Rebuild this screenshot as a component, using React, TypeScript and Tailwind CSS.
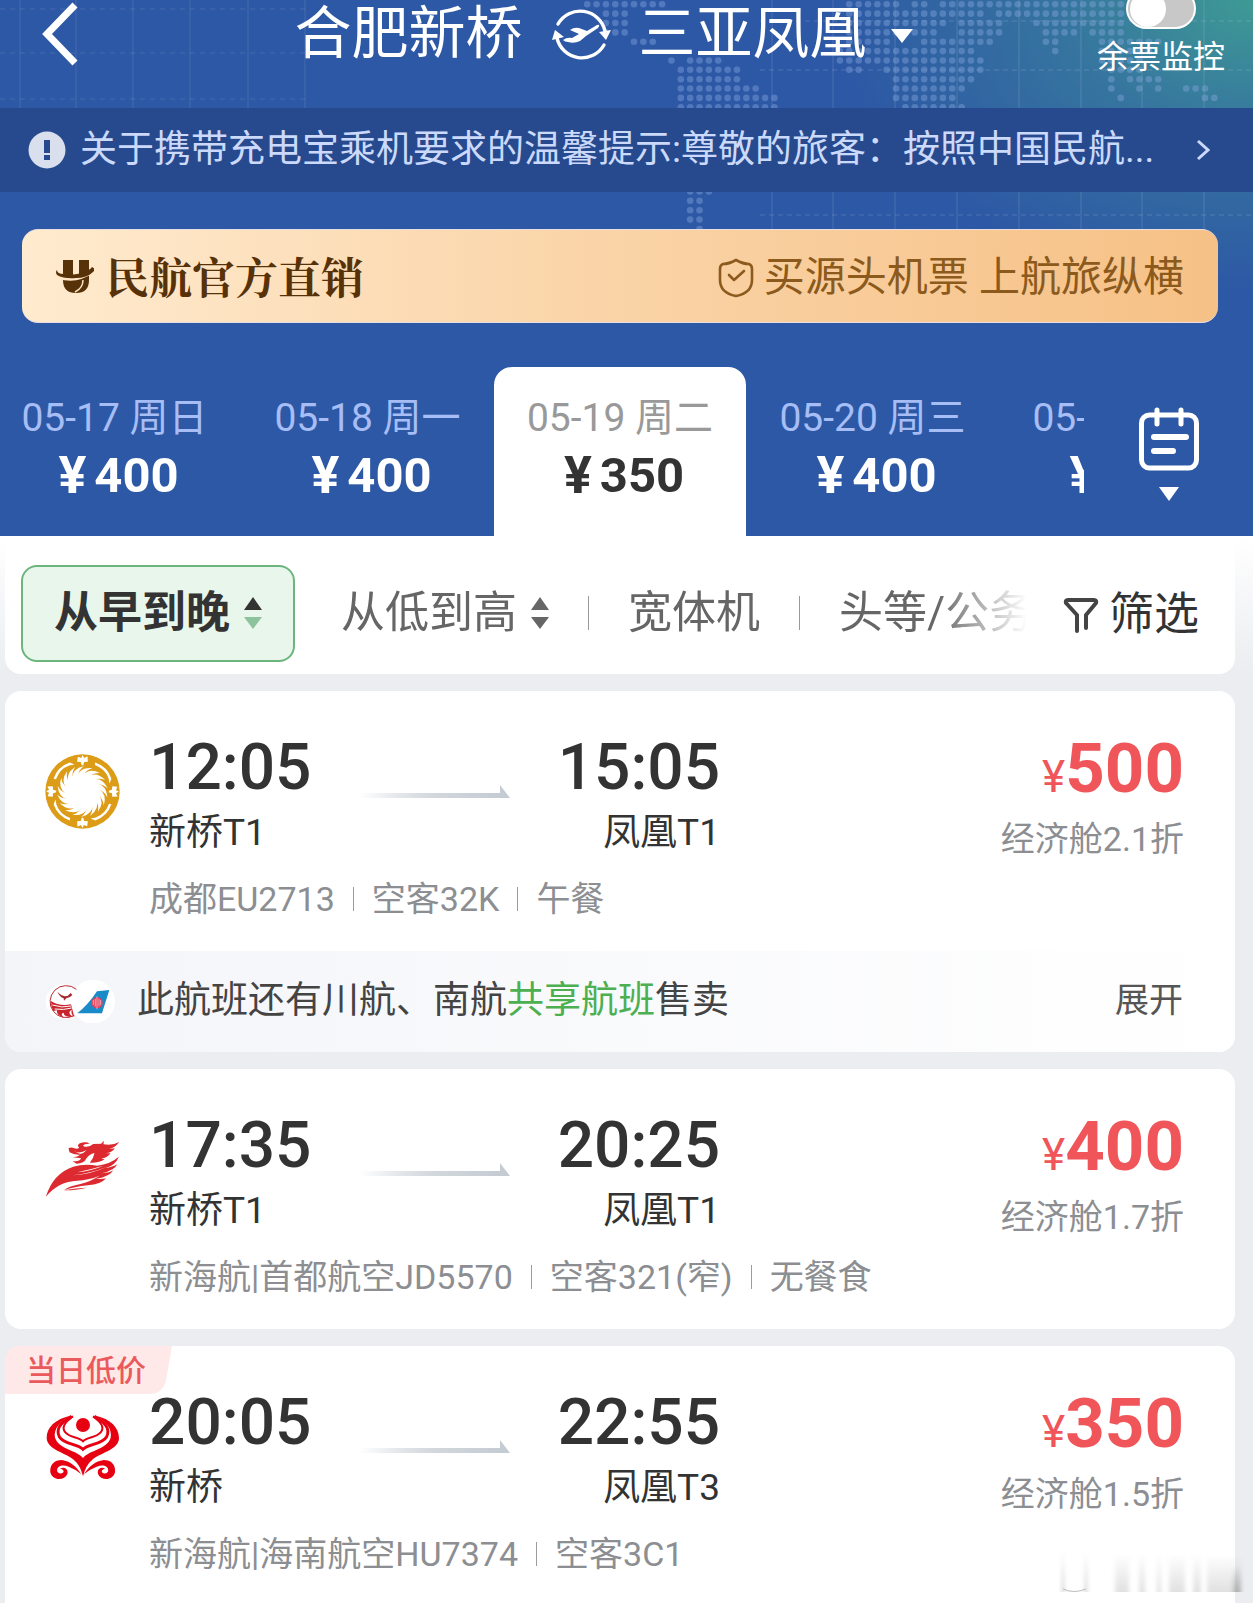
import { ReactNode } from "react";

const DOT_ROWS: [number, [number, number][]][] = [
  [0, [[-5, 3], [23, 28], [30, 31], [33, 52]]],
  [1, [[-3, -1], [23, 37], [39, 52]]],
  [2, [[-3, -1], [23, 33], [35, 39], [43, 52]]],
  [3, [[-3, -1], [23, 32], [35, 39], [44, 47], [49, 52]]],
  [4, [[0, 2], [23, 27], [31, 35], [36, 38], [44, 45], [50, 56]]],
  [5, [[22, 36], [45, 45], [50, 55]]],
  [6, [[4, 4], [6, 9], [22, 37], [50, 54]]],
  [7, [[5, 11], [23, 24], [27, 37], [51, 54]]],
  [8, [[5, 11], [28, 36], [51, 51], [53, 56]]],
  [9, [[5, 13], [28, 35], [51, 51], [54, 54], [56, 56], [59, 61]]],
  [10, [[5, 15], [28, 34], [52, 52], [61, 62]]],
  [11, [[5, 15], [29, 35]]],
  [20, [[6, 8]]],
  [21, [[6, 7]]],
  [22, [[6, 7]]],
  [23, [[6, 7]]],
  [24, [[7, 7]]],
];

function MapBackdrop() {
  return (
    <svg className="absolute right-0 top-0 h-[230px] w-[1253px]" viewBox="0 0 1253 230" aria-hidden="true">
      <g stroke="#ffffff" strokeOpacity="0.12">
        {[20, 76, 133, 190, 248, 305].map((x) => (
          <path key={x} d={`M${x} 0V108`} />
        ))}
        {[9, 53, 99].map((y) => (
          <path key={y} d={`M0 ${y}H306`} strokeDasharray="5 5" />
        ))}
        {[772, 833, 895, 957, 1019, 1081, 1142, 1204].map((x) => (
          <path key={x} d={`M${x} 0V230`} strokeOpacity="0.14" />
        ))}
        {[21, 70, 215].map((y) => (
          <path key={y} d={`M760 ${y}H1253`} strokeDasharray="5 4" strokeOpacity="0.16" />
        ))}
      </g>
      <g fill="#86a8dd" fillOpacity="0.42">
        {DOT_ROWS.flatMap(([row, spans]) =>
          spans.flatMap(([from, to]) =>
            Array.from({ length: to - from + 1 }, (_, i) => (
              <circle key={`${row}-${from + i}`} cx={634 + (from + i) * 9.36} cy={4.3 + row * 9.36} r="3.3" />
            )),
          ),
        )}
      </g>
    </svg>
  );
}

function SwapIcon() {
  return (
    <svg className="h-[56px] w-[60px]" viewBox="0 0 60 56" fill="none" aria-hidden="true">
      <g stroke="#fff" strokeWidth="3.4" strokeLinecap="round">
        <path d="M7 18A25.500 25.500 0 0 1 54 25" />
        <path d="M53 39A25.500 25.500 0 0 1 6 32" />
      </g>
      <g fill="#fff">
        <path d="M48 26L60 24L55 34Z" />
        <path d="M1 34L4 24L13 31Z" />
        <path d="M12 34Q16 31 21 32L28 28L19 24Q23 21 28 22L36 25L46 19Q50 18 47 22L35 30L29 35Q23 38 17 36Q14 36 12 34Z" />
      </g>
    </svg>
  );
}

function BrandMark() {
  return (
    <svg className="h-[36px] w-[38px]" viewBox="0 0 38 36" aria-hidden="true">
      <path d="M7 2H17V20H23V2H33V22Q33 35 20 35Q7 35 7 22Z" fill="#573107" />
      <path d="M2 19Q20 25 36 14" fill="none" stroke="#fee6c6" strokeWidth="3" />
      <path d="M27 22Q27 30 19 34" fill="none" stroke="#fee6c6" strokeWidth="1.500" />
      <path d="M1 12Q1 16 8 16Q18 18 28 14Q34 12 36 9Q40 11 37 14Q31 20 20 20Q8 21 1 17Q-1 14 1 12Z" fill="#573107" />
    </svg>
  );
}

function ShieldIcon() {
  return (
    <svg className="h-[40px] w-[36px]" viewBox="0 0 36 40" fill="none" stroke="#8b5a1c" strokeWidth="2.600" strokeLinejoin="round" strokeLinecap="round" aria-hidden="true">
      <path d="M18 2Q25 6 31 6Q34 7 34 11V22Q34 35 18 38Q2 35 2 22V11Q2 7 5 6Q11 6 18 2Z" />
      <path d="M11 17L16 22L26 13" />
    </svg>
  );
}

function CalendarIcon() {
  return (
    <svg className="h-[64px] w-[60px]" viewBox="0 0 60 64" fill="none" stroke="#fff" strokeWidth="5" strokeLinecap="round" aria-hidden="true">
      <rect x="2.500" y="8" width="55" height="53" rx="8" />
      <path d="M18 3V17M42 3V17" />
      <path d="M15 30H47M15 44H34" strokeWidth="6" />
    </svg>
  );
}

function SortArrows({ up, down }: { up: string; down: string }) {
  return (
    <svg className="h-[32px] w-[18px]" viewBox="0 0 18 32" aria-hidden="true">
      <path d="M9 0L18 13H0Z" fill={up} />
      <path d="M0 20H18L9 32Z" fill={down} />
    </svg>
  );
}

function RouteArrow() {
  return (
    <svg className="h-[13px] w-[150px]" viewBox="0 0 150 13" aria-hidden="true">
      <defs>
        <linearGradient id="route" x1="0" x2="1" y1="0" y2="0">
          <stop offset="0" stopColor="#c3cad2" stopOpacity="0" />
          <stop offset="0.500" stopColor="#d2d7dc" />
          <stop offset="1" stopColor="#c3cad2" />
        </linearGradient>
      </defs>
      <path d="M0 8H140V0L150 13H0Z" fill="url(#route)" />
    </svg>
  );
}

function ChengduLogo() {
  return (
    <svg className="h-[75px] w-[75px]" viewBox="134 100 224 224" role="img" aria-label="成都航空">
      <circle cx="246" cy="212" r="111" fill="#dc9c17" />
      <circle cx="246" cy="212" r="54" fill="#fff" />
      {Array.from({ length: 18 }, (_, i) => (
        <path key={i} transform={`rotate(${i * 20} 246 212)`} d="M230 166Q240 138 276 142Q256 148 250 164Z" fill="#fff" />
      ))}
      {[0, 45, 90, 135, 180, 225, 270, 315].map((a) => (
        <g key={a} transform={`rotate(${a} 246 212)`}>
          {a % 90 === 0 ? (
            <path d="M230 123L232 108L242 112L246 103L251 112L261 107L262 123L251 124L248 134L243 132L241 124Z" fill="#fff" />
          ) : (
            <path d="M212 124Q246 107 280 124L286 138L273 129Q246 116 216 130Z" fill="#fff" />
          )}
        </g>
      ))}
    </svg>
  );
}

function CapitalLogo() {
  return (
    <svg className="h-[58px] w-[75px]" viewBox="134 126 224 174" role="img" aria-label="首都航空" fill="#dd2a30">
      <path d="M136 296Q158 226 218 206Q252 196 290 203Q330 198 355 176Q346 201 314 211Q342 205 351 198Q342 217 304 226Q330 224 338 217Q330 235 286 243Q312 243 318 240Q300 260 262 262Q222 266 190 277Q206 264 240 258Q272 250 296 234Q262 247 230 248Q174 250 136 296Z" />
      <path d="M204 151Q213 146 221 151Q231 154 236 149Q228 142 238 136Q256 129 268 137Q252 136 247 143Q261 152 278 138L302 137L310 128L309 139Q334 144 356 132Q344 149 326 153L343 151Q334 165 316 166L330 166Q320 181 302 181L312 184Q298 195 268 194Q279 182 282 165Q266 169 258 181Q251 197 228 197L216 189Q236 193 242 181L217 178Q232 177 239 170Q220 171 207 163Z" />
      <path d="M221 160Q238 168 259 156Q250 166 239 168Z" fill="#fff" />
      <path d="M216 232Q270 229 320 206Q276 224 216 232ZM230 223Q273 219 309 203Q270 214 230 223Z" fill="#fff" />
      <path d="M190 277Q228 270 258 269Q236 276 190 277Z" />
    </svg>
  );
}

function HainanLogo() {
  return (
    <svg className="h-[67px] w-[74px]" viewBox="135 938 222 201" role="img" aria-label="海南航空">
      <g fill="#e60012">
        <circle cx="246" cy="974" r="21" />
        <path d="M208 946C164 956 136 980 137 1014C139 1048 190 1056 218 1078Q238 1094 246 1128Q254 1094 274 1078C302 1056 353 1048 354 1014C354 980 328 956 284 946C312 960 335 985 329 1012C318 1048 266 1048 246 1073C226 1048 174 1048 162 1012C156 985 180 960 208 946Z" />
        <path d="M241 1122C224 1096 207 1083 183 1079C157 1079 146 1096 148 1116C153 1141 190 1143 199 1121C203 1106 190 1098 177 1105Q190 1107 187 1116Q178 1124 169 1114C165 1098 183 1091 203 1099Q223 1106 241 1122Z" />
        <path d="M249 1122C266 1096 283 1083 308 1079C334 1079 344 1096 342 1116C337 1141 300 1143 291 1121C287 1106 300 1098 313 1105Q300 1107 303 1116Q312 1124 321 1114C325 1098 307 1091 287 1099Q267 1106 249 1122Z" />
      </g>
      <g fill="none" stroke="#e60012">
        <path d="M212 948C178 966 164 988 175 1009C189 1033 230 1030 246 1047C262 1030 303 1033 317 1009C328 988 314 966 280 948" strokeWidth="9" />
        <path d="M216 948C190 966 181 982 193 996C208 1013 234 1010 246 1023C258 1010 284 1013 299 996C311 982 302 966 276 948" strokeWidth="6" />
      </g>
    </svg>
  );
}

function ShareLogos() {
  return (
    <svg className="h-[44px] w-[70px]" viewBox="134 770 210 132" role="img" aria-label="川航、南航">
      <circle cx="188" cy="838" r="52" fill="#fff" />
      <circle cx="278" cy="838" r="66" fill="#fff" />
      <path d="M228 801A48 48 0 1 0 222 879" fill="none" stroke="#bd2b31" strokeWidth="3" />
      <path d="M171 808Q182 820 193 822Q203 823 211 812L216 818Q207 828 198 828L191 835L190 828Q178 823 171 808Z" fill="#a8272c" />
      <path d="M152 836Q176 852 212 846L222 884Q209 872 215 862Q197 871 219 884Q190 885 190 871Q177 875 192 886Q165 878 170 864L159 866Q151 852 152 836Z" fill="#c9252d" />
      <path d="M156 848Q185 858 212 851M163 860Q190 864 214 857" stroke="#fff" strokeWidth="3" fill="none" />
      <path d="M231 873Q262 849 290 807L327 803L305 873Z" fill="#1b8ac8" />
      <circle cx="290" cy="841" r="17" fill="#e4405a" />
      <path d="M290 822V861M279 833V848M285 830V852M296 830V852M301 833V848" stroke="#f9d3da" strokeWidth="2" />
    </svg>
  );
}

const DAYS = [
  { date: "05-17 周日", price: "400" },
  { date: "05-18 周一", price: "400" },
  { date: "05-19 周二", price: "350", active: true },
  { date: "05-20 周三", price: "400" },
  { date: "05-21 周四", price: "400" },
];

type Flight = {
  logo: ReactNode;
  depart: string;
  from: string;
  arrive: string;
  to: string;
  price: string;
  discount: string;
  details: string[];
};

function FlightBody({ f }: { f: Flight }) {
  return (
    <div className="flex h-[260px] pl-10 pr-[51px] pt-10">
      <div className="flex h-[120px] w-[75px] shrink-0 items-center justify-center">{f.logo}</div>
      <div className="flex min-w-0 flex-1 flex-col pl-[29px]">
        <div className="flex justify-between">
          <div className="flex w-[571px] justify-between">
            <div className="w-[162px]">
              <div className="text-[64px] font-medium leading-[74px] text-[#333]">{f.depart}</div>
              <div className="mt-2 text-[37px] leading-[40px] text-[#333]">{f.from}</div>
            </div>
            <div className="ml-8 flex-1 pl-[17px] pt-[54px]">
              <RouteArrow />
            </div>
            <div className="text-right">
              <div className="text-[64px] font-medium leading-[74px] text-[#333]">{f.arrive}</div>
              <div className="mt-2 text-[37px] leading-[40px] text-[#333]">{f.to}</div>
            </div>
          </div>
          <div className="text-right">
            <div className="h-[76px] font-bold leading-[76px] text-[#f0555a]">
              <span className="text-[44px] font-normal">¥</span>
              <span className="text-[69px]">{f.price}</span>
            </div>
            <div className="mt-3 text-[34px] leading-[40px] text-[#8c8e92]">{f.discount}</div>
          </div>
        </div>
        <div className="mt-5 flex items-center text-[34px] leading-[40px] text-[#8c8e92]">
          {f.details.map((d, i) => (
            <span key={d} className="flex items-center">
              {i > 0 && <span className="mx-[18px] h-6 w-px bg-[#9a9ca0]" />}
              {d}
            </span>
          ))}
        </div>
      </div>
    </div>
  );
}

const FLIGHTS: Flight[] = [
  { logo: <ChengduLogo />, depart: "12:05", from: "新桥T1", arrive: "15:05", to: "凤凰T1", price: "500", discount: "经济舱2.1折", details: ["成都EU2713", "空客32K", "午餐"] },
  { logo: <CapitalLogo />, depart: "17:35", from: "新桥T1", arrive: "20:25", to: "凤凰T1", price: "400", discount: "经济舱1.7折", details: ["新海航|首都航空JD5570", "空客321(窄)", "无餐食"] },
  { logo: <HainanLogo />, depart: "20:05", from: "新桥", arrive: "22:55", to: "凤凰T3", price: "350", discount: "经济舱1.5折", details: ["新海航|海南航空HU7374", "空客3C1"] },
];

export default function App() {
  return (
    <div className="relative flex min-h-screen flex-col overflow-hidden bg-[#ebedf0] font-['Roboto','Noto_Sans_CJK_SC',sans-serif]">
      <header className="relative bg-[#2d58a5] bg-[radial-gradient(ellipse_420px_290px_at_100%_0%,#3e9a94_0%,#36759f_45%,#2d58a5_100%)]">
        <MapBackdrop />
        <div className="relative grid h-[108px] grid-cols-[295fr_auto_341fr] text-white">
          <button aria-label="返回" className="h-[68px] w-[120px] pl-10">
            <svg className="h-[64px] w-[40px]" viewBox="0 0 40 64" fill="none" stroke="#fff" strokeWidth="7" aria-hidden="true">
              <path d="M35 3L7 32L35 61" />
            </svg>
          </button>
          <div className="flex h-[68px] items-center whitespace-nowrap text-[57px] leading-[68px]">
            <span>合肥新桥</span>
            <button aria-label="交换城市" className="mx-7">
              <SwapIcon />
            </button>
            <button className="flex items-center">
              三亚凤凰
              <svg className="ml-6 mt-1 h-[14px] w-[22px]" viewBox="0 0 22 14" fill="#fff" aria-hidden="true">
                <path d="M0 0H22L11 14Z" />
              </svg>
            </button>
          </div>
          <label className="-mt-3 mr-7 flex w-[128px] flex-col items-center justify-self-end text-[32px] leading-[40px]">
            <input type="checkbox" className="peer sr-only" />
            <span className="mb-2 flex h-[41px] w-[70px] items-center rounded-full border-2 border-white bg-[#c8c8c8] px-[2px]">
              <span className="size-[36px] rounded-full bg-white" />
            </span>
            余票监控
          </label>
        </div>
        <a href="#notice" className="relative flex h-[84px] items-center bg-[#274a8e] pl-7 pr-[43px] text-[37px] text-[#cbd9fb]">
          <svg className="mr-[14px] size-[38px] shrink-0" viewBox="0 0 38 38" aria-hidden="true">
            <circle cx="19" cy="19" r="18.500" fill="#d9dfec" />
            <path d="M16 9H22V22H16ZM16 24H22V29H16Z" fill="#274a8e" />
          </svg>
          <span className="flex-1 truncate">关于携带充电宝乘机要求的温馨提示:尊敬的旅客：按照中国民航...</span>
          <svg className="h-[22px] w-[14px] shrink-0" viewBox="0 0 14 22" fill="none" stroke="#cbd9fb" strokeWidth="3" aria-hidden="true">
            <path d="M2 2L12 11L2 20" />
          </svg>
        </a>
        <div className="relative ml-[22px] mr-[35px] mt-[37px] flex h-[94px] items-center justify-between rounded-[16px] border-y border-[#e8dde0] bg-linear-to-r from-[#ffebcf] via-[#fad3a6] to-[#f6c186] pl-[34px] pr-[34px]">
          <span className="flex items-center gap-3 font-['Noto_Serif_CJK_SC','Noto_Sans_CJK_SC',serif] text-[43px] font-bold text-[#573107]">
            <BrandMark />
            民航官方直销
          </span>
          <span className="flex items-center gap-[10px] pt-1 text-[41px] text-[#8b5a1c]">
            <ShieldIcon />
            买源头机票 上航旅纵横
          </span>
        </div>
        <div className="relative mt-[44px] flex h-[169px]">
          <div className="-ml-3 flex flex-1 overflow-hidden">
            {DAYS.map((d) => (
              <button
                key={d.date}
                className={
                  d.active
                    ? "w-[252px] shrink-0 rounded-t-[18px] bg-white pb-2 text-[#333]"
                    : "w-[253px] shrink-0 pb-2 text-white"
                }
              >
                <span className={d.active ? "block text-[39px] leading-[44px] text-[#999]" : "block text-[39px] leading-[44px] text-[#a6bdf5]"}>
                  {d.date}
                </span>
                <span className="mt-3 flex items-center justify-center gap-2 pl-2 font-bold leading-[48px]">
                  <span className="text-[52px]">¥</span>
                  <span className="text-[49px]">{d.price}</span>
                </span>
              </button>
            ))}
          </div>
          <button aria-label="选择日期" className="flex w-[169px] flex-col items-center justify-center gap-4 pt-1">
            <CalendarIcon />
            <svg className="h-[14px] w-[20px]" viewBox="0 0 20 14" fill="#fff" aria-hidden="true">
              <path d="M0 0H20L10 14Z" />
            </svg>
          </button>
        </div>
      </header>

      <nav className="bg-linear-to-b from-white to-[#ebedf0] pl-[5px] pr-[18px]">
        <div className="flex h-[138px] items-center rounded-b-[16px] bg-white pl-4 pr-9 pt-4 text-[44px] text-[#666]">
          <div className="flex min-w-0 flex-1 items-center overflow-hidden whitespace-nowrap mask-r-from-91% mask-r-to-100%">
            <button className="flex h-[97px] shrink-0 items-center gap-[14px] rounded-[16px] border-2 border-[#6db57e] bg-[#e9f6ec] px-[31px] font-bold text-[#333]">
              从早到晚
              <SortArrows up="#333" down="#8cc29c" />
            </button>
            <button className="ml-[46px] flex shrink-0 items-center gap-[14px]">
              从低到高
              <SortArrows up="#666" down="#666" />
            </button>
            <span className="mx-[39px] h-[34px] w-px shrink-0 bg-[#999]" />
            <button>宽体机</button>
            <span className="mx-[39px] h-[34px] w-px shrink-0 bg-[#999]" />
            <button>头等/公务舱</button>
          </div>
          <button className="ml-9 flex items-center gap-[10px] pt-1 text-[45px] text-[#333]">
            <svg className="h-[36px] w-[36px]" viewBox="0 0 36 36" fill="none" stroke="#444" strokeWidth="4" strokeLinejoin="round" strokeLinecap="round" aria-hidden="true">
              <path d="M14 34V18L3 6Q2 3 5 3H31Q34 3 33 6L23 18V31" />
            </svg>
            筛选
          </button>
        </div>
      </nav>

      <main className="flex flex-1 flex-col gap-[17px] pl-[5px] pr-[18px] pt-[17px]">
        <article className="overflow-hidden rounded-[16px] bg-white">
          <FlightBody f={FLIGHTS[0]} />
          <div className="flex h-[101px] items-center bg-linear-to-r from-[#f4f5f9] to-white pb-[2px] pl-10 pr-[52px] text-[37px] text-[#444]">
            <ShareLogos />
            <span className="ml-[22px] flex-1">
              此航班还有川航、南航<a href="#share" className="text-[#4caf50]">共享航班</a>售卖
            </span>
            <button className="text-[34px] text-[#555]">展开</button>
          </div>
        </article>
        <article className="rounded-[16px] bg-white">
          <FlightBody f={FLIGHTS[1]} />
        </article>
        <article className="relative flex-1 rounded-t-[16px] bg-white">
          <span className="absolute left-0 top-0 flex h-[48px] w-[167px] items-center text-[30px] font-medium text-[#ea5a5c]">
            <svg className="absolute inset-0 h-[48px] w-[167px]" viewBox="0 0 167 48" fill="#ffe8e8" aria-hidden="true">
              <path d="M0 16Q0 0 16 0H167L161 34Q158 48 144 48H0Z" />
            </svg>
            <span className="relative pl-[21px]">当日低价</span>
          </span>
          <FlightBody f={FLIGHTS[2]} />
        </article>
      </main>

      <svg className="absolute bottom-3 right-2 h-[42px] w-[186px]" viewBox="0 0 186 42" aria-hidden="true">
        <defs>
          <linearGradient id="fade" x1="0" x2="0" y1="0" y2="1">
            <stop offset="0" stopColor="#999" stopOpacity="0" />
            <stop offset="1" stopColor="#999" stopOpacity="0.600" />
          </linearGradient>
          <filter id="soft">
            <feGaussianBlur stdDeviation="2 0" />
          </filter>
        </defs>
        <g fill="url(#fade)" filter="url(#soft)">
          <path d="M3 0H5V40H3ZM26 0H28V40H26Z" />
          <path opacity="0.500" d="M56 2H70V40H56ZM80 2H86V40H80ZM98 2H102V40H98ZM110 2H126V40H110ZM134 2H142V40H134ZM148 4H182V40H148Z" />
          <path d="M174 14H182V40H174Z" />
        </g>
        <path d="M4 37Q15 42 27 37" fill="none" stroke="#bbb" />
      </svg>
    </div>
  );
}
